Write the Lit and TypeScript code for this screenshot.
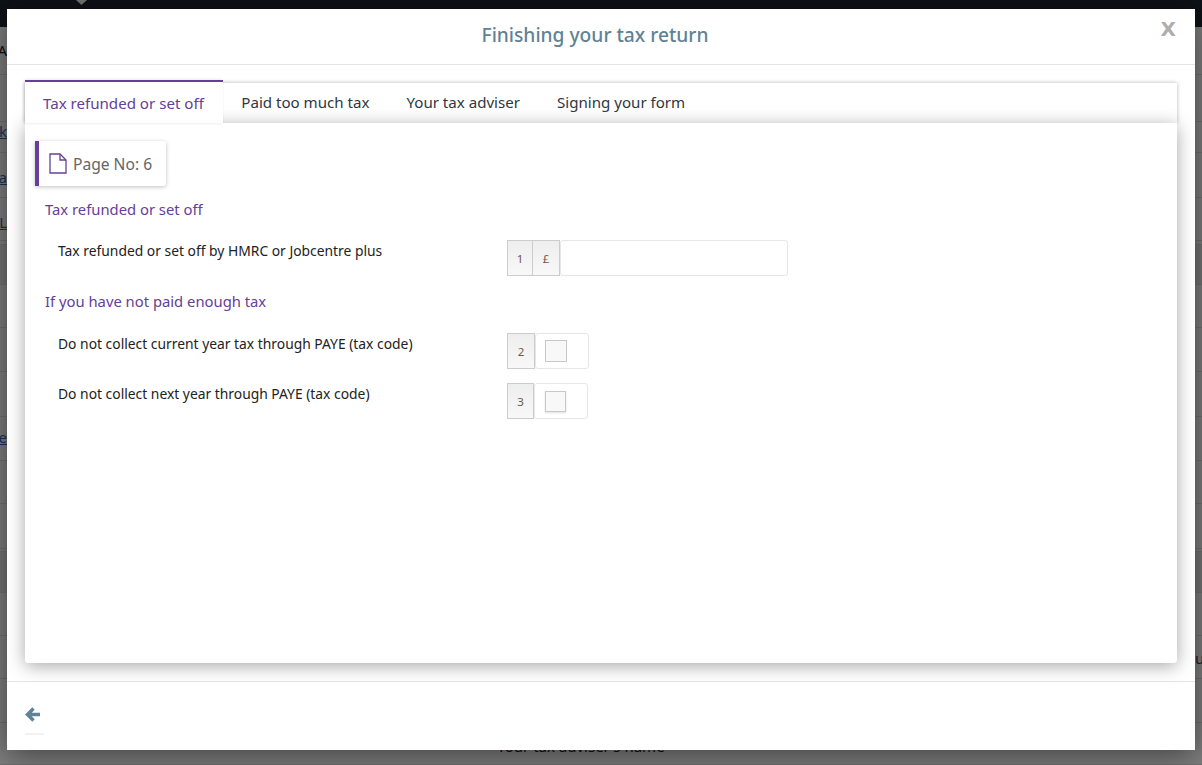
import { LitElement, html, css } from "lit";
import { customElement } from "lit/decorators.js";

type BgRow = { h: number; text?: string; pad?: number; kind?: string; dark?: boolean };

const ROWS: BgRow[] = [
  { h: 48, text: "SA", pad: 14, kind: "left plain" },
  { h: 47 },
  { h: 31, text: "nk", pad: 0, kind: "left link" },
  { h: 45, text: "ca", pad: 15, kind: "left link" },
  { h: 43, text: "SL", pad: 15, kind: "left link" },
  { h: 4 },
  { h: 40, dark: true },
  { h: 43 },
  { h: 44 },
  { h: 45 },
  { h: 44, text: "Pe", pad: 11, kind: "left link" },
  { h: 43 },
  { h: 45 },
  { h: 3 },
  { h: 41, dark: true },
  { h: 43 },
  { h: 43, text: "ur", pad: 13, kind: "right plain" },
  { h: 44 },
  { h: 42, text: "Your tax adviser's name", pad: 14, kind: "mid plain" },
];

@customElement("app-root")
export class AppRoot extends LitElement {
  static styles = css`
    :host { display: block; position: relative; width: 1202px; height: 765px; overflow: hidden; font-family: "Noto Sans", sans-serif; background: #fff; }
    .nav { height: 27px; background: #1c222e; padding-left: 76px; box-sizing: border-box; }
    .nav svg { display: block; }
    .row { border-bottom: 1px solid #e2e2e2; box-sizing: border-box; font-size: 15px; line-height: 18px; display: flex; color: #222; }
    .row.dark { background: #ececec; }
    .row.right { justify-content: flex-end; }
    .left .t { width: 7px; display: flex; justify-content: flex-end; overflow: hidden; flex: none; }
    .right .t { width: 7px; overflow: hidden; flex: none; color: #1f3f6a; }
    .mid .t { margin-left: 497px; }
    .link .t span { color: #2a6fc0; text-decoration: underline; }
    .backdrop { position: absolute; inset: 0; background: rgba(0,0,0,.5); }
    .modal { position: absolute; left: 7px; top: 9px; width: 1188px; height: 741px; background: #fff; display: flex; flex-direction: column; box-shadow: 0 5px 30px rgba(0,0,0,.5); }
    .head { height: 56px; box-sizing: border-box; flex: none; border-bottom: 1px solid #e5e5e5; display: flex; align-items: center; justify-content: center; position: relative; padding: 0 12px 5px 0; }
    .head h1 { margin: 0; font-size: 19.2px; font-weight: 500; color: #5f8296; }
    .close { position: absolute; right: 19px; top: 8px; font: 700 20px "DejaVu Sans", sans-serif; color: #aeaeae; }
    .body { flex: none; height: 617px; box-sizing: border-box; padding: 15px 18px 0; border-bottom: 1px solid #e5e5e5; }
    .tabs { display: flex; height: 43px; align-items: flex-end; position: relative; }
    .tabbar { position: absolute; left: 0; right: 0; top: 3px; bottom: 0; background: #fff; box-shadow: 0 0 4px rgba(0,0,0,.3); }
    .tab { position: relative; height: 40px; padding: 0 18.5px 3px; display: flex; align-items: center; font-size: 15.1px; color: #2f3742; box-sizing: border-box; }
    .tab.active { height: 43px; padding: 0 19px 0 18px; border-top: 2px solid #64409a; background: #fff; color: #64409a; z-index: 2; box-shadow: -1px 0 3px rgba(0,0,0,.12); }
    .panel { position: relative; z-index: 1; height: 540px; background: #fff; border-radius: 0 0 3px 3px; box-shadow: 0 3px 18px rgba(0,0,0,.35); padding: 18px 10px 0; box-sizing: border-box; }
    .pageno { display: inline-flex; align-items: center; gap: 6px; height: 45px; width: 131px; box-sizing: border-box; padding-left: 10px; border-left: 4px solid #64409a; border-radius: 0 3px 3px 0; box-shadow: 0 1px 4px rgba(0,0,0,.25); font-size: 15.6px; color: #666; }
    .sec { font-size: 14.8px; color: #64409a; margin: 0; padding-left: 10px; line-height: 20px; }
    .s1 { margin-top: 13px; }
    .line { display: flex; padding-left: 23px; height: 50px; font-size: 13.85px; color: #222; }
    .line1 { margin-top: 21px; height: 51px; }
    .line2 { margin-top: 22px; }
    .lab { width: 449px; line-height: 20px; padding-top: 1px; }
    .ctl { display: flex; height: 36px; }
    .num { background: linear-gradient(#eee,#f8f8f8); border: 1px solid #ccc; display: flex; align-items: center; justify-content: center; font-size: 11.5px; color: #6b5a4a; box-sizing: border-box; height: 36px; }
    .n1 { width: 26px; }
    .n2 { width: 27px; border-left: 0; }
    .n3 { width: 28px; }
    .n4 { width: 27px; }
    .inp { height: 36px; box-sizing: border-box; border: 1px solid #e6e6e6; border-radius: 3px; display: flex; align-items: center; }
    .wide { width: 228px; }
    .narrow { width: 54px; }
    .cb { width: 22px; height: 22px; box-sizing: border-box; background: #f8f8f8; border: 1px solid #c8c8c8; margin-left: 9px; }
    .cb.b { width: 21px; height: 21px; margin-left: 10px; box-shadow: 0 1px 2px rgba(0,0,0,.12); }
    .foot { flex: 1; padding: 25px 18px 0; position: relative; }
    .foot svg { display: block; }
    .foot::after { content: ""; position: absolute; left: 18px; top: 51px; width: 19px; height: 2px; background: #f2f2f2; }
  `;

  render() {
    return html`
      <div class="page">
        <div class="nav"><svg width="11" height="5" viewBox="0 0 11 5"><path d="M0 0h11L5.500 5z" fill="#eee"/></svg></div>
        ${ROWS.map((r) => html`<div class="row ${r.kind ?? ""} ${r.dark ? "dark" : ""}" style="height:${r.h}px;padding-top:${r.pad ?? 0}px">${r.text ? html`<div class="t"><span>${r.text}</span></div>` : ""}</div>`)}
      </div>
      <div class="backdrop"></div>
      <div class="modal">
        <div class="head"><h1>Finishing your tax return</h1><span class="close">X</span></div>
        <div class="body">
          <div class="tabs">
            <div class="tabbar"></div>
            <div class="tab active">Tax refunded or set off</div>
            <div class="tab">Paid too much tax</div>
            <div class="tab">Your tax adviser</div>
            <div class="tab">Signing your form</div>
          </div>
          <div class="panel">
            <div class="pageno">
              <svg width="18" height="21" viewBox="0 0 18 21" fill="none" stroke="#64409a" stroke-width="1.3"><path d="M1 1h10l6 6v13H1z"/><path d="M11 1v6h6"/></svg>
              Page No: 6
            </div>
            <p class="sec s1">Tax refunded or set off</p>
            <div class="line line1">
              <div class="lab">Tax refunded or set off by HMRC or Jobcentre plus</div>
              <div class="ctl"><div class="num n1">1</div><div class="num n2">£</div><div class="inp wide"></div></div>
            </div>
            <p class="sec">If you have not paid enough tax</p>
            <div class="line line2">
              <div class="lab">Do not collect current year tax through PAYE (tax code)</div>
              <div class="ctl"><div class="num n3">2</div><div class="inp narrow"><div class="cb"></div></div></div>
            </div>
            <div class="line">
              <div class="lab">Do not collect next year through PAYE (tax code)</div>
              <div class="ctl"><div class="num n4">3</div><div class="inp narrow"><div class="cb b"></div></div></div>
            </div>
          </div>
        </div>
        <div class="foot">
          <svg width="15" height="15" viewBox="0 0 15 15" fill="none" stroke="#5f8296" stroke-width="3.4"><path d="M8.500 1.500 2.500 7.500l6 6M3 7.500h12"/></svg>
        </div>
      </div>
    `;
  }
}
